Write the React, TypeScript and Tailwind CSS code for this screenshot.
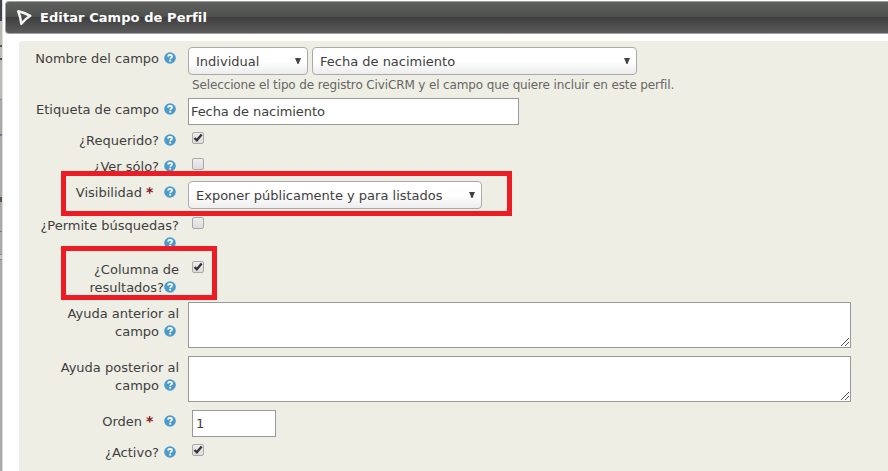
import type { ReactNode } from "react";

function HelpIcon() {
  return (
    <svg className="mr-[3px] inline-block h-[12px] w-[12px] align-[-1px]" viewBox="0 0 12 12">
      <circle cx="6" cy="6" r="5.8" fill="#4a9bcb" />
      <path d="M3.900 4.600C4.100 3.300 5 2.900 6 2.900c1.200 0 2 .6 2 1.500C8 5.700 6.200 5.600 6.200 7.200" fill="none" stroke="#fff" strokeWidth="1.700" />
      <rect x="5.300" y="8" width="1.800" height="1.600" fill="#fff" />
    </svg>
  );
}

function Row({ h, pt = "", label, children }: { h: string; pt?: string; label: ReactNode; children: ReactNode }) {
  return (
    <div className={`flex shrink-0 items-start ${h}`}>
      <div className={`w-[160px] shrink-0 whitespace-nowrap text-right leading-[18px] ${pt}`}>{label}</div>
      <div className="ml-[9px]">{children}</div>
    </div>
  );
}

function Label({ text, required }: { text: string; required?: boolean }) {
  return (
    <>
      <span>{text}</span>
      {required ? (
        <span className="mr-[11px] ml-[4px] inline-block w-[7px] text-[14px] leading-[16px] font-bold text-[#8b1520]">*</span>
      ) : (
        <span className="inline-block w-[5px]" />
      )}
      <HelpIcon />
    </>
  );
}

function Select({ w, text }: { w: string; text: string }) {
  return (
    <div className={`flex h-[28px] items-center justify-between rounded-[4px] border border-[#aaa] bg-linear-to-b from-white from-50% to-[#ededed] pr-[6px] pl-[7px] whitespace-nowrap ${w}`}>
      <span className="pt-[2px]">{text}</span>
      <svg className="h-[7px] w-[6px]" viewBox="0 0 6 7"><path d="M0 0h6L3.500 6h-1z" fill="#444" /></svg>
    </div>
  );
}

function Check({ on, top = "mt-0" }: { on?: boolean; top?: string }) {
  return (
    <div className={`ml-[4px] h-[12px] w-[12px] rounded-[2px] border border-[#a9a9a9] bg-linear-to-b from-[#ededed] to-[#dcdcdc] ${top}`}>
      {on && (
        <svg className="block h-[10px] w-[10px]" viewBox="0 0 10 10">
          <path d="M1.500 5L3.800 7.300L8.700 1.400" fill="none" stroke="#333" strokeWidth="2.300" />
        </svg>
      )}
    </div>
  );
}

function TextArea() {
  return (
    <div className="flex h-[46px] w-[663px] items-end justify-end border border-[#999] bg-white p-px">
      <svg className="h-[8px] w-[8px]" viewBox="0 0 8 8" shapeRendering="crispEdges">
        <path d="M0 8L8 0M4 8L8 4" stroke="#555" strokeWidth="1" />
      </svg>
    </div>
  );
}

export default function App() {
  return (
    <div className="relative flex h-[471px] w-[888px] overflow-hidden bg-white font-['DejaVu_Sans',Verdana,sans-serif] text-[13px] text-[#3e3e3e]">
      <div className="flex w-[3px] shrink-0 flex-col border-r border-[#dedede] bg-[#aaa9a7]">
        <div className="h-[21px] bg-[#45434f]" />
        <div className="h-[24px] bg-[#b8bbb0]" />
        <div className="h-[15px] border-y-2 border-[#555] bg-[#b9bbb5]" />
        <div className="h-[40px] border-b border-[#8c8c8c] bg-[#b9bbb5]" />
        <div className="mt-[34px] h-[2px] bg-[#74719a]" />
        <div className="mt-[61px] h-[5px] bg-[#60564e]" />
        <div className="mt-[29px] h-px bg-[#777]" />
        <div className="mt-[22px] h-[6px] border-y border-[#858585] bg-[#c3c3c3]" />
      </div>
      <div className="ml-[2px] flex w-[883px] shrink-0 flex-col pt-px">
        <header className="flex h-[33px] shrink-0 items-center rounded-l-[4px] border border-r-0 border-[#a0a0a0] bg-[linear-gradient(#5e605e_0%,#4d504d_49%,#3e3e3e_50%,#5c5c5c_100%)] pl-[10px]">
          <svg className="h-[17px] w-[16px]" viewBox="0 0 16 17">
            <path d="M2.200 2.300Q8 3.500 14.300 6.800Q9 10 5.300 14.800Q4.500 8 2.200 2.300Z" fill="none" stroke="#f4f4f4" strokeWidth="2.500" strokeLinejoin="round" />
          </svg>
          <h1 className="pt-px ml-[8px] font-bold tracking-[0.08px] text-white">Editar Campo de Perfil</h1>
        </header>
        <main className="mt-[7px] ml-[14px] flex h-[430px] flex-col rounded-tl-[4px] bg-[#eeeee5]">
          <Row h="h-[57px]" pt="pt-[9px]" label={<Label text="Nombre del campo" />}>
            <div className="mt-[6px] flex gap-[4px]">
              <Select w="w-[120px]" text="Individual" />
              <Select w="w-[325px]" text="Fecha de nacimiento" />
            </div>
            <p className="mt-[1px] ml-[4px] text-[12px] leading-[18px] tracking-[-0.13px] whitespace-nowrap text-[#666]">Seleccione el tipo de registro CiviCRM y el campo que quiere incluir en este perfil.</p>
          </Row>
          <Row h="h-[34px]" pt="pt-[3px]" label={<Label text="Etiqueta de campo" />}>
            <div className="flex h-[27px] w-[331px] items-center border border-[#999] bg-white pt-px pl-[2px] tracking-[-0.07px]">Fecha de nacimiento</div>
          </Row>
          <Row h="h-[25px]" label={<Label text="¿Requerido?" />}><Check on /></Row>
          <Row h="h-[24px]" pt="pt-px" label={<Label text="¿Ver sólo?" />}><Check top="mt-px" /></Row>
          <Row h="h-[36px]" pt="pt-[3px]" label={<Label text="Visibilidad" required />}>
            <Select w="w-[294px]" text="Exponer públicamente y para listados" />
          </Row>
          <Row h="h-[43px]" label={<>¿Permite búsquedas?<br /><HelpIcon /></>}><Check /></Row>
          <Row h="h-[42px]" pt="pt-px" label={<>¿Columna de<br />resultados?<HelpIcon /></>}><Check on top="mt-px" /></Row>
          <Row h="h-[54px]" pt="pt-[3px]" label={<>Ayuda anterior al<br /><Label text="campo" /></>}><TextArea /></Row>
          <Row h="h-[54px]" pt="pt-[3px]" label={<>Ayuda posterior al<br /><Label text="campo" /></>}><TextArea /></Row>
          <Row h="h-[33px]" pt="pt-[3px]" label={<Label text="Orden" required />}>
            <div className="ml-[4px] flex h-[27px] w-[84px] items-center border border-[#999] bg-white pl-[3px] pt-px">1</div>
          </Row>
          <Row h="h-[28px]" pt="pt-px" label={<Label text="¿Activo?" />}><Check on top="mt-px" /></Row>
        </main>
      </div>
      <div className="absolute top-[171px] left-[61px] h-[45px] w-[451px] border-[5px] border-[#ed1c24]" />
      <div className="absolute top-[246px] left-[61px] h-[54px] w-[156px] border-[5px] border-[#ed1c24]" />
    </div>
  );
}
